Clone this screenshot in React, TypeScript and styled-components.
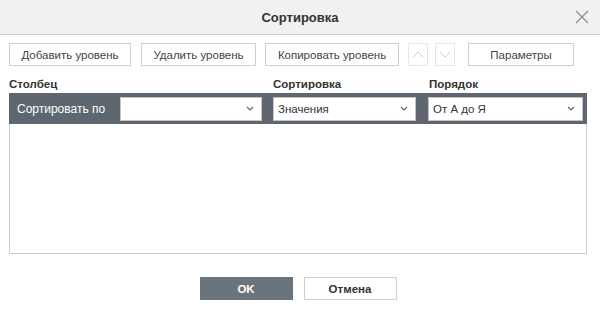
import React from "react";
import styled, { createGlobalStyle } from "styled-components";

const GlobalStyle = createGlobalStyle`
  html, body {
    margin: 0;
    padding: 0;
    background: #ffffff;
    font-family: "Liberation Sans", Arial, sans-serif;
  }
`;

const Dialog = styled.div`
  width: 600px;
  height: 314px;
  background: #fff;
  display: flex;
  flex-direction: column;
  overflow: hidden;
`;

const Header = styled.div`
  height: 35px;
  flex: 0 0 35px;
  box-sizing: border-box;
  background: #f1f1f1;
  border-bottom: 1px solid #d0d0d0;
  display: flex;
  align-items: center;
  justify-content: center;
  position: relative;
`;

const Title = styled.div`
  font-size: 13px;
  font-weight: bold;
  color: #333;
`;

const CloseBtn = styled.div`
  position: absolute;
  right: 11px;
  top: 10px;
  width: 14px;
  height: 14px;
`;

const Body = styled.div`
  padding: 8px 13px 0 9px;
  display: flex;
  flex-direction: column;
`;

const Toolbar = styled.div`
  display: flex;
  align-items: center;
  height: 23px;
`;

const Btn = styled.div<{ $w: number; $ml?: number }>`
  width: ${(p) => p.$w}px;
  margin-left: ${(p) => p.$ml ?? 0}px;
  height: 23px;
  box-sizing: border-box;
  border: 1px solid #cfcfcf;
  background: #fff;
  color: #444;
  font-size: 11.5px;
  display: flex;
  align-items: center;
  justify-content: center;
  white-space: nowrap;
`;

const ArrowBtn = styled.div<{ $ml: number }>`
  width: 20px;
  height: 23px;
  margin-left: ${(p) => p.$ml}px;
  box-sizing: border-box;
  border: 1px solid #e6e6e6;
  display: flex;
  align-items: center;
  justify-content: center;
`;

const Labels = styled.div`
  display: flex;
  height: 17px;
  margin-top: 10px;
  align-items: flex-end;
  padding-bottom: 3px;
  box-sizing: border-box;
`;

const Label = styled.div<{ $w: number }>`
  width: ${(p) => p.$w}px;
  font-size: 11.5px;
  font-weight: bold;
  color: #333;
`;

const Table = styled.div`
  width: 578px;
  height: 161px;
  box-sizing: border-box;
  border: 1px solid #cdcdcd;
  border-top: none;
`;

const Row = styled.div`
  height: 31px;
  margin: 0 -1px;
  background: #5e6770;
  display: flex;
  align-items: center;
`;

const RowLabel = styled.div`
  width: 111px;
  padding-left: 8px;
  box-sizing: border-box;
  color: #fff;
  font-size: 12px;
`;

const Select = styled.div<{ $w: number; $ml: number }>`
  width: ${(p) => p.$w}px;
  margin-left: ${(p) => p.$ml}px;
  height: 24px;
  box-sizing: border-box;
  background: #fff;
  border: 1px solid #c4c4c4;
  display: flex;
  align-items: center;
  justify-content: space-between;
  padding: 0 7px 0 4px;
  font-size: 11.5px;
  color: #333;
`;

const Footer = styled.div`
  display: flex;
  justify-content: center;
  gap: 11px;
  margin-top: 23px;
`;

const FooterBtn = styled.div<{ $primary?: boolean }>`
  width: 93px;
  height: 23px;
  box-sizing: border-box;
  display: flex;
  align-items: center;
  justify-content: center;
  font-size: 11.5px;
  font-weight: bold;
  background: ${(p) => (p.$primary ? "#6b747b" : "#fff")};
  color: ${(p) => (p.$primary ? "#fff" : "#333")};
  border: 1px solid ${(p) => (p.$primary ? "#6b747b" : "#cfcfcf")};
`;

const Chevron = () => (
  <svg width="8" height="5" viewBox="0 0 8 5">
    <path d="M1 1 L4 4 L7 1" fill="none" stroke="#666" strokeWidth="1.2" />
  </svg>
);

const Caret = ({ up }: { up?: boolean }) => (
  <svg width="12" height="7" viewBox="0 0 12 7">
    <path
      d={up ? "M1 6 L6 1 L11 6" : "M1 1 L6 6 L11 1"}
      fill="none"
      stroke="#cccccc"
      strokeWidth="1"
    />
  </svg>
);

export default function App() {
  return (
    <>
      <GlobalStyle />
      <Dialog>
        <Header>
          <Title>Сортировка</Title>
          <CloseBtn>
            <svg width="14" height="14" viewBox="0 0 14 14">
              <path d="M1 1 L13 13 M13 1 L1 13" stroke="#8a8a8a" strokeWidth="1.2" />
            </svg>
          </CloseBtn>
        </Header>
        <Body>
          <Toolbar>
            <Btn $w={122}>Добавить уровень</Btn>
            <Btn $w={115} $ml={10}>Удалить уровень</Btn>
            <Btn $w={134} $ml={9}>Копировать уровень</Btn>
            <ArrowBtn $ml={9}>
              <Caret up />
            </ArrowBtn>
            <ArrowBtn $ml={7}>
              <Caret />
            </ArrowBtn>
            <Btn $w={106} $ml={13}>Параметры</Btn>
          </Toolbar>
          <Labels>
            <Label $w={264}>Столбец</Label>
            <Label $w={156}>Сортировка</Label>
            <Label $w={150}>Порядок</Label>
          </Labels>
          <Table>
            <Row>
              <RowLabel>Сортировать по</RowLabel>
              <Select $w={142} $ml={0}>
                <span />
                <Chevron />
              </Select>
              <Select $w={143} $ml={11}>
                <span>Значения</span>
                <Chevron />
              </Select>
              <Select $w={155} $ml={12}>
                <span>От А до Я</span>
                <Chevron />
              </Select>
            </Row>
          </Table>
          <Footer>
            <FooterBtn $primary>OK</FooterBtn>
            <FooterBtn>Отмена</FooterBtn>
          </Footer>
        </Body>
      </Dialog>
    </>
  );
}
